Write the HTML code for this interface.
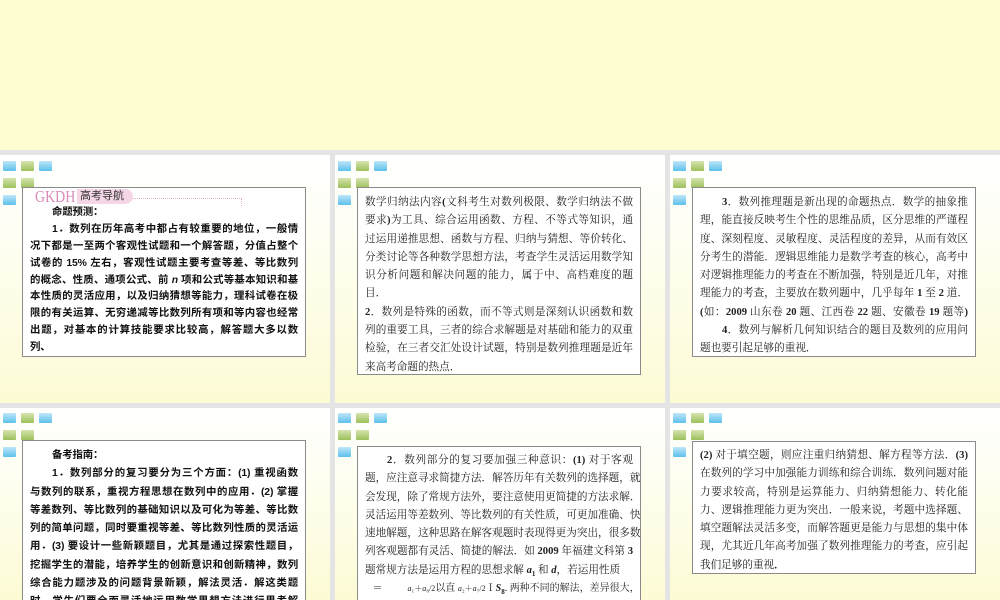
<!DOCTYPE html>
<html style="width:1000px;height:600px;overflow:hidden"><head><meta charset="utf-8"><style>
*{margin:0;padding:0;box-sizing:border-box}
body{width:1000px;height:600px;overflow:hidden;background:#e4e4e4;position:relative;font-family:"Liberation Serif","Noto Serif CJK SC","Noto Sans CJK SC",serif}
.top{position:absolute;left:0;top:0;width:1000px;height:150px;background:#fefdd2}
.p{position:absolute;background:linear-gradient(#ffffff 0%,#fefef0 40%,#fdfbd4 100%);overflow:hidden}
.sq{position:absolute;width:13px;height:10px;border-radius:1px}
.b{background:linear-gradient(#bfe6f8,#5cc0ec)}
.g{background:linear-gradient(#d6e4b0,#9cc05a)}
.box{position:absolute;background:#fff;border:1px solid #8a8a8a;padding:6px 7px 0 7px;font-size:10.6px;color:#222;overflow:hidden}
.box div{height:18.3px;line-height:18.3px;text-align:justify;text-align-last:justify;white-space:nowrap}
.box div.l{text-align-last:left}
.bold{font-weight:bold;font-family:"Liberation Sans","Noto Sans CJK SC",sans-serif;color:#111;font-size:10.4px;letter-spacing:-0.15px}
.i{text-indent:22px}
.t1 div{height:16.9px;line-height:16.9px}
</style></head><body>
<div class="top"></div>

<div class="p" style="left:0;top:155px;width:330px;height:248px"></div>
<div class="p" style="left:335px;top:155px;width:330px;height:248px"></div>
<div class="p" style="left:670px;top:155px;width:330px;height:248px"></div>
<div class="p" style="left:0;top:408px;width:330px;height:192px"></div>
<div class="p" style="left:335px;top:408px;width:330px;height:192px"></div>
<div class="p" style="left:670px;top:408px;width:330px;height:192px"></div>

<div class="sq b" style="left:3px;top:161px"></div><div class="sq g" style="left:21px;top:161px"></div><div class="sq b" style="left:39px;top:161px"></div>
<div class="sq g" style="left:3px;top:178px"></div><div class="sq g" style="left:21px;top:178px"></div>
<div class="sq b" style="left:3px;top:195px"></div>
<div class="sq b" style="left:338px;top:161px"></div><div class="sq g" style="left:356px;top:161px"></div><div class="sq b" style="left:374px;top:161px"></div>
<div class="sq g" style="left:338px;top:178px"></div><div class="sq g" style="left:356px;top:178px"></div>
<div class="sq b" style="left:338px;top:195px"></div>
<div class="sq b" style="left:673px;top:161px"></div><div class="sq g" style="left:691px;top:161px"></div><div class="sq b" style="left:709px;top:161px"></div>
<div class="sq g" style="left:673px;top:178px"></div><div class="sq g" style="left:691px;top:178px"></div>
<div class="sq b" style="left:673px;top:195px"></div>
<div class="sq b" style="left:3px;top:413px"></div><div class="sq g" style="left:21px;top:413px"></div><div class="sq b" style="left:39px;top:413px"></div>
<div class="sq g" style="left:3px;top:430px"></div><div class="sq g" style="left:21px;top:430px"></div>
<div class="sq b" style="left:3px;top:447px"></div>
<div class="sq b" style="left:338px;top:413px"></div><div class="sq g" style="left:356px;top:413px"></div><div class="sq b" style="left:374px;top:413px"></div>
<div class="sq g" style="left:338px;top:430px"></div><div class="sq g" style="left:356px;top:430px"></div>
<div class="sq b" style="left:338px;top:447px"></div>
<div class="sq b" style="left:673px;top:413px"></div><div class="sq g" style="left:691px;top:413px"></div><div class="sq b" style="left:709px;top:413px"></div>
<div class="sq g" style="left:673px;top:430px"></div><div class="sq g" style="left:691px;top:430px"></div>
<div class="sq b" style="left:673px;top:447px"></div>

<!-- panel 1 -->
<div class="box bold t1" style="left:22px;top:187px;width:284px;height:170px;padding-top:17px">
<div class="l i">命题预测：</div>
<div class="i">1．数列在历年高考中都占有较重要的地位，一般情</div>
<div>况下都是一至两个客观性试题和一个解答题，分值占整个</div>
<div>试卷的 15% 左右，客观性试题主要考查等差、等比数列</div>
<div>的概念、性质、通项公式、前 <i>n</i> 项和公式等基本知识和基</div>
<div>本性质的灵活应用，以及归纳猜想等能力，理科试卷在极</div>
<div>限的有关运算、无穷递减等比数列所有项和等内容也经常</div>
<div>出题，对基本的计算技能要求比较高，解答题大多以数</div>
<div class="l">列、</div>
</div>
<div style="position:absolute;left:35px;top:188px;font-size:17px;color:#d98ab8;font-family:'Liberation Serif',serif;line-height:18px;transform:scaleX(0.82);transform-origin:left top">GKDH</div>
<div style="position:absolute;left:77px;top:189px;width:56px;height:15px;background:#f4d6e6;border-radius:0 8px 8px 0;font-size:11px;line-height:15px;color:#333;padding-left:3px;font-family:'Liberation Sans','Noto Sans CJK SC',sans-serif">高考导航</div>
<div style="position:absolute;left:133px;top:198px;width:109px;border-top:1px dotted #e0b0cc"></div>
<div style="position:absolute;left:241px;top:198px;height:8px;border-left:1px dotted #e0b0cc"></div>

<!-- panel 2 -->
<div class="box" style="left:357px;top:187px;width:284px;height:188px">
<div>数学归纳法内容<b>(</b>文科考生对数列极限、数学归纳法不做</div>
<div>要求<b>)</b>为工具、综合运用函数、方程、不等式等知识，通</div>
<div>过运用递推思想、函数与方程、归纳与猜想、等价转化、</div>
<div>分类讨论等各种数学思想方法，考查学生灵活运用数学知</div>
<div>识分析问题和解决问题的能力，属于中、高档难度的题</div>
<div class="l">目．</div>
<div><b>2</b>．数列是特殊的函数，而不等式则是深刻认识函数和数</div>
<div>列的重要工具，三者的综合求解题是对基础和能力的双重</div>
<div>检验，在三者交汇处设计试题，特别是数列推理题是近年</div>
<div class="l">来高考命题的热点．</div>
</div>

<!-- panel 3 -->
<div class="box" style="left:692px;top:187px;width:284px;height:170px">
<div class="i"><b>3</b>．数列推理题是新出现的命题热点．数学的抽象推</div>
<div>理，能直接反映考生个性的思维品质，区分思维的严谨程</div>
<div>度、深刻程度、灵敏程度、灵活程度的差异，从而有效区</div>
<div>分考生的潜能．逻辑思维能力是数学考查的核心，高考中</div>
<div>对逻辑推理能力的考查在不断加强，特别是近几年，对推</div>
<div>理能力的考查，主要放在数列题中，几乎每年 <b>1</b> 至 <b>2</b> 道．</div>
<div><b>(</b>如：<b>2009</b> 山东卷 <b>20</b> 题、江西卷 <b>22</b> 题、安徽卷 <b>19</b> 题等<b>)</b></div>
<div class="i"><b>4</b>．数列与解析几何知识结合的题目及数列的应用问</div>
<div class="l">题也要引起足够的重视．</div>
</div>

<!-- panel 4 -->
<div class="box bold" style="left:22px;top:440px;width:284px;height:160px;border-bottom:none;padding-top:6px">
<div class="l i">备考指南：</div>
<div class="i">1．数列部分的复习要分为三个方面：(1) 重视函数</div>
<div>与数列的联系，重视方程思想在数列中的应用．(2) 掌握</div>
<div>等差数列、等比数列的基础知识以及可化为等差、等比数</div>
<div>列的简单问题，同时要重视等差、等比数列性质的灵活运</div>
<div>用．(3) 要设计一些新颖题目，尤其是通过探索性题目，</div>
<div>挖掘学生的潜能，培养学生的创新意识和创新精神，数列</div>
<div>综合能力题涉及的问题背景新颖，解法灵活．解这类题</div>
<div>时，学生们要全面灵活地运用数学思想方法进行思考解</div>
</div>

<!-- panel 5 -->
<div class="box" style="left:357px;top:446px;width:284px;height:154px;border-bottom:none;padding-top:5px">
<div class="i"><b>2</b>．数列部分的复习要加强三种意识：<b>(1)</b> 对于客观</div>
<div>题，应注意寻求简捷方法．解答历年有关数列的选择题，就</div>
<div>会发现，除了常规方法外，要注意使用更简捷的方法求解．</div>
<div>灵活运用等差数列、等比数列的有关性质，可更加准确、快</div>
<div>速地解题，这种思路在解客观题时表现得更为突出，很多数</div>
<div>列客观题都有灵活、简捷的解法．如 <b>2009</b> 年福建文科第 <b>3</b></div>
<div class="l">题常规方法是运用方程的思想求解 <b><i>a</i><sub style="font-size:7px">1</sub></b> 和 <b><i>d</i></b>，若运用性质</div>
<div class="l" style="font-size:10px">&nbsp;&nbsp;&nbsp;＝&nbsp;&nbsp;&nbsp;&nbsp;&nbsp;&nbsp;&nbsp;&nbsp;&nbsp;&nbsp;<span style="font-size:8px"><i>a</i>₁＋<i>a</i>₈/2</span>以直 <span style="font-size:8px"><i>a</i>₂＋<i>a</i>₇/2</span>Ⅰ<b><i>S</i><sub style="font-size:7px">8</sub></b>. 两种不同的解法，差异很大，</div>
</div>

<!-- panel 6 -->
<div class="box" style="left:692px;top:441px;width:284px;height:133px;padding-top:5px">
<div><b>(2)</b> 对于填空题，则应注重归纳猜想、解方程等方法．<b>(3)</b></div>
<div>在数列的学习中加强能力训练和综合训练．数列问题对能</div>
<div>力要求较高，特别是运算能力、归纳猜想能力、转化能</div>
<div>力、逻辑推理能力更为突出．一般来说，考题中选择题、</div>
<div>填空题解法灵活多变，而解答题更是能力与思想的集中体</div>
<div>现，尤其近几年高考加强了数列推理能力的考查，应引起</div>
<div class="l">我们足够的重视<b>．</b></div>
</div>
</body></html>
